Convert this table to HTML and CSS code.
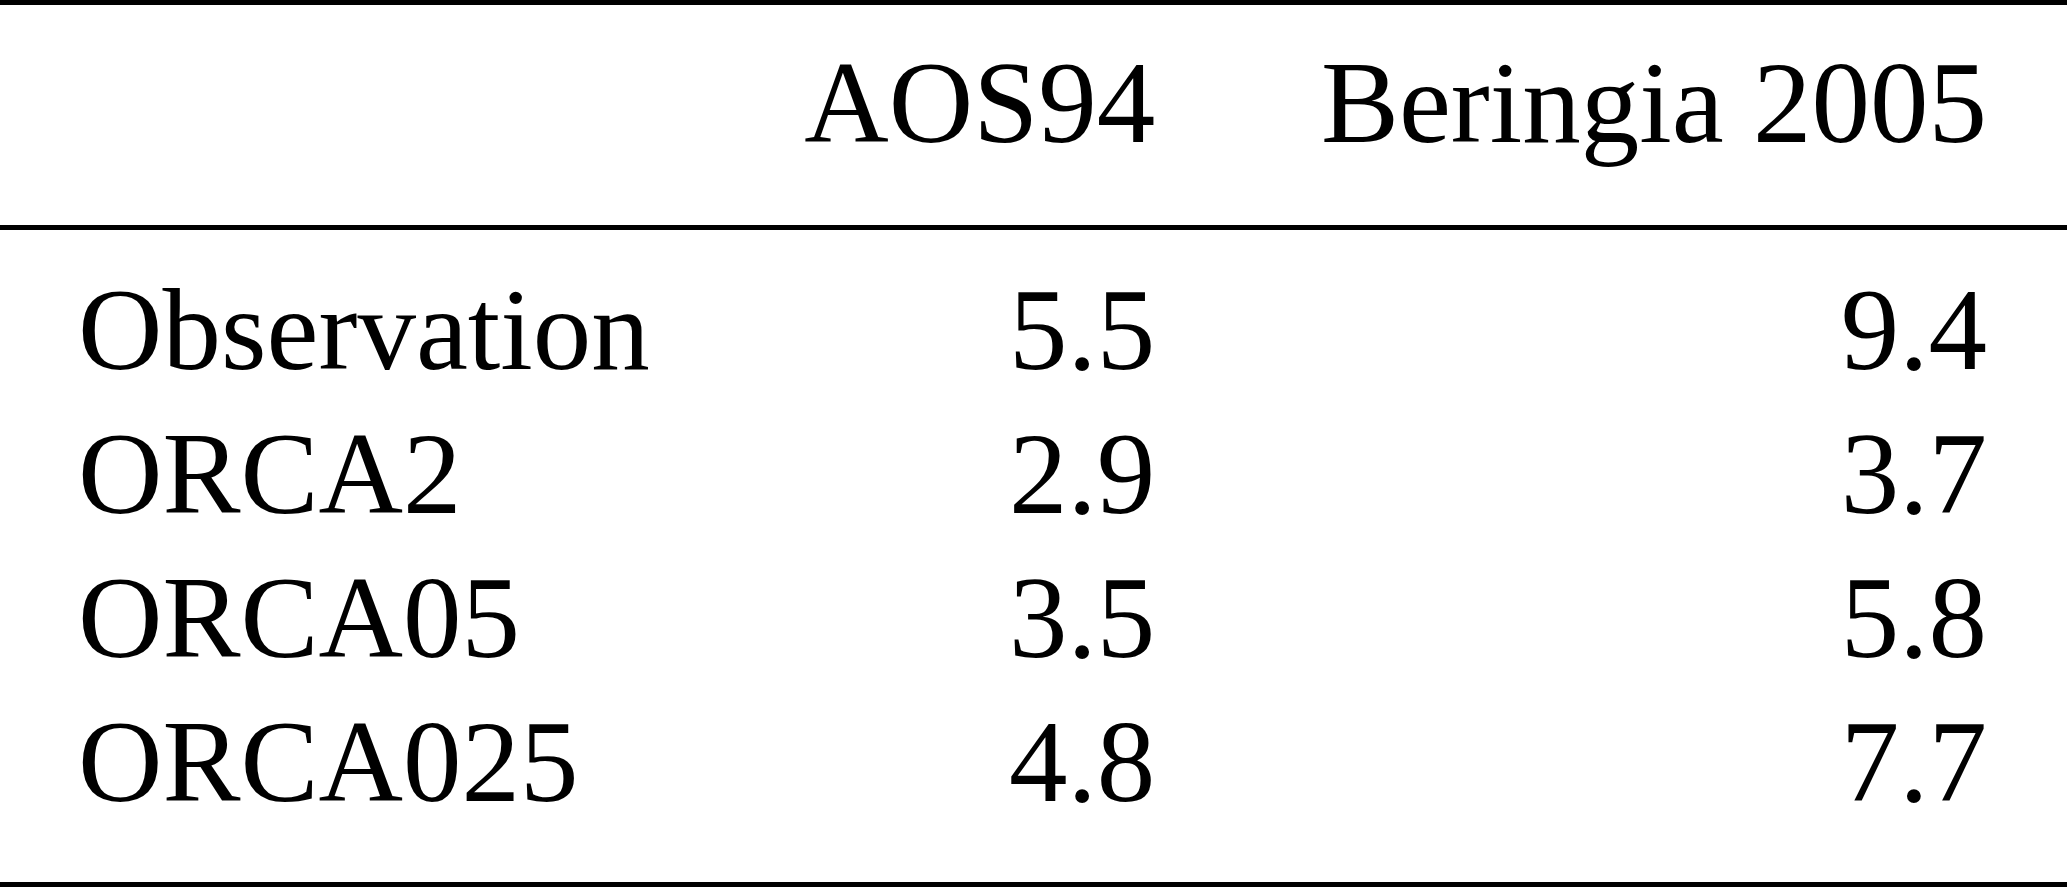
FILE: index.html
```html
<!DOCTYPE html>
<html lang="en">
<head>
    <meta charset="UTF-8">
    <meta name="viewport" content="width=device-width, initial-scale=1.0">
    <title>Transport comparison</title>
    <link rel="stylesheet" href="styles.css">
</head>
<body>
    <table class="results">
        <thead>
            <tr>
                <th class="label"></th>
                <th class="num aos">AOS94</th>
                <th class="num">Beringia 2005</th>
            </tr>
        </thead>
        <tbody>
            <tr class="first">
                <td class="label">Observation</td>
                <td class="num aos">5.5</td>
                <td class="num">9.4</td>
            </tr>
            <tr>
                <td class="label">ORCA2</td>
                <td class="num aos">2.9</td>
                <td class="num">3.7</td>
            </tr>
            <tr>
                <td class="label">ORCA05</td>
                <td class="num aos">3.5</td>
                <td class="num">5.8</td>
            </tr>
            <tr class="last">
                <td class="label">ORCA025</td>
                <td class="num aos">4.8</td>
                <td class="num">7.7</td>
            </tr>
        </tbody>
    </table>
</body>
</html>
```

FILE: styles.css
```css
body {
    margin: 0;
    background: #fff;
    color: #000;
    font-family: "Liberation Serif", "Times New Roman", serif;
    overflow: hidden;
}
.results {
    width: 100%;
    border-collapse: separate;
    border-spacing: 0;
    border-top: 5px solid #000;
    border-bottom: 5px solid #000;
    font-size: 117px;
    line-height: 144px;
}
.results th,
.results td {
    padding: 0 80px 0 78px;
    font-weight: normal;
    white-space: nowrap;
}
.results th {
    padding-top: 26px;
    padding-bottom: 50px;
    border-bottom: 5px solid #000;
}
.results .label {
    text-align: left;
}
.results .num {
    text-align: right;
}
.results .aos {
    padding-right: 86px;
    padding-left: 72px;
}
.results .first td {
    padding-top: 28px;
}
.results .last td {
    padding-bottom: 48px;
}
```
